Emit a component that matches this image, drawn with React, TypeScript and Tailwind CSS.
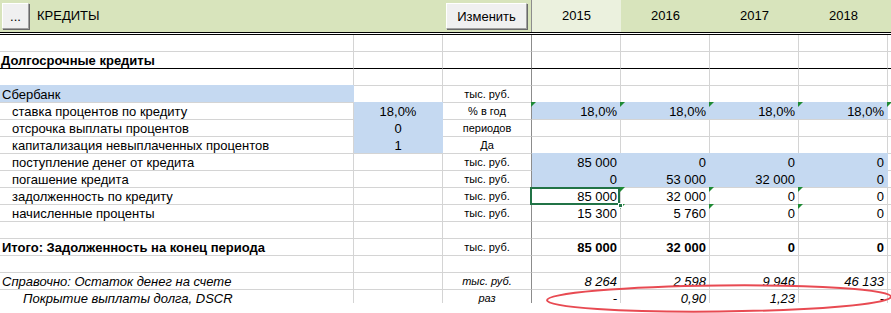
// Excel-like credit sheet: frozen header band, label/value/unit columns and four year columns.

type Row = {
  label?: string;
  pad?: string;
  style?: "bold" | "italic";
  aFill?: boolean;
  b?: string;
  bFill?: boolean;
  unit?: string;
  unitItalic?: boolean;
  years?: string[];
  yFill?: boolean;
  yBold?: boolean;
  yItalic?: boolean;
  tri?: boolean[];
  selected?: boolean;
  noTop?: boolean;
  topBlack?: boolean;
  short?: boolean;
};

const rows: Row[] = [
  { noTop: true },
  { label: "Долгосрочные кредиты", style: "bold", pad: "pl-[1px]" },
  { topBlack: true },
  { label: "Сбербанк", pad: "pl-[2px]", aFill: true, unit: "тыс. руб." },
  {
    label: "ставка процентов по кредиту",
    b: "18,0%",
    bFill: true,
    unit: "% в год",
    years: ["18,0%", "18,0%", "18,0%", "18,0%"],
    yFill: true,
    tri: [true, true, true, true, true],
  },
  { label: "отсрочка выплаты процентов", b: "0", bFill: true, unit: "периодов" },
  { label: "капитализация невыплаченных процентов", b: "1", bFill: true, unit: "Да" },
  {
    label: "поступление денег от кредита",
    unit: "тыс. руб.",
    years: ["85 000", "0", "0", "0"],
    yFill: true,
  },
  {
    label: "погашение кредита",
    unit: "тыс. руб.",
    years: ["0", "53 000", "32 000", "0"],
    yFill: true,
  },
  {
    label: "задолженность по кредиту",
    unit: "тыс. руб.",
    years: ["85 000", "32 000", "0", "0"],
    tri: [false, true, true, true, false],
    selected: true,
  },
  {
    label: "начисленные проценты",
    unit: "тыс. руб.",
    years: ["15 300", "5 760", "0", "0"],
    tri: [false, true, true, true, false],
  },
  {},
  {
    label: "Итого: Задолженность на конец периода",
    style: "bold",
    pad: "pl-[2px]",
    unit: "тыс. руб.",
    years: ["85 000", "32 000", "0", "0"],
    yBold: true,
  },
  {},
  {
    label: "Справочно: Остаток денег на счете",
    style: "italic",
    pad: "pl-[2px]",
    unit: "тыс. руб.",
    unitItalic: true,
    years: ["8 264", "2 598", "9 946", "46 133"],
    yItalic: true,
  },
  {
    label: "Покрытие выплаты долга, DSCR",
    style: "italic",
    pad: "pl-[23px]",
    unit: "раз",
    unitItalic: true,
    years: ["-", "0,90", "1,23", "-"],
    yItalic: true,
    short: true,
  },
];

function Triangle() {
  return (
    <svg
      width="5"
      height="5"
      viewBox="0 0 5 5"
      className="absolute left-[-1px] top-[-1px] z-10"
    >
      <polygon points="0,0 5,0 0,5" fill="#1e8a34" />
    </svg>
  );
}

function Cell({
  row,
  fill,
  w,
  dark,
  className,
  children,
}: {
  row: Row;
  fill?: boolean;
  w: string;
  dark?: boolean;
  className?: string;
  children?: React.ReactNode;
}) {
  const top = row.noTop
    ? ""
    : row.topBlack
      ? "border-t border-t-black"
      : fill
        ? "border-t border-t-[#c5d9f1]"
        : "border-t border-t-[#d4d4d4]";
  const right = dark
    ? "border-r border-r-[#8c8c8c]"
    : fill
      ? "border-r border-r-[#c5d9f1]"
      : "border-r border-r-[#d4d4d4]";
  return (
    <div
      className={`relative shrink-0 h-full ${w} ${top} ${right} ${fill ? "bg-[#c5d9f1]" : ""} ${className ?? ""}`}
    >
      {children}
    </div>
  );
}

function SheetRow({ row }: { row: Row }) {
  const h = row.noTop ? "h-[16px]" : row.short ? "h-[14px]" : "h-[17px]";
  const labelStyle =
    row.style === "bold" ? "font-bold" : row.style === "italic" ? "italic" : "";
  const yearStyle = row.yBold ? "font-bold" : row.yItalic ? "italic" : "";
  return (
    <div className={`flex ${h} leading-[17px] whitespace-nowrap`}>
      <Cell row={row} w="w-[354px]" fill={row.aFill}>
        <span className={`block ${row.pad ?? "pl-[12px]"} ${labelStyle}`}>{row.label}</span>
      </Cell>
      <Cell row={row} w="w-[89px]" fill={row.bFill} className="text-center">
        {row.b}
      </Cell>
      <Cell row={row} w="w-[89px]" dark className={`text-center text-[11px] ${row.unitItalic ? "italic" : ""}`}>
        {row.unit}
      </Cell>
      {[0, 1, 2, 3].map((i) => (
        <Cell
          key={i}
          row={row}
          w="w-[89px]"
          fill={row.yFill}
          className={`text-right pr-[3px] ${yearStyle}`}
        >
          {row.tri?.[i] && <Triangle />}
          {row.years?.[i]}
          {row.selected && i === 0 && (
            <>
              <div className="absolute top-[-1px] left-[-2px] right-0 bottom-[-1px] z-20 border-2 border-[#217346]" />
              <div className="absolute left-[86px] top-[15px] z-30 w-[5px] h-[5px] bg-[#217346] border border-white" />
            </>
          )}
        </Cell>
      ))}
      <Cell row={row} w="flex-1" className="border-r-0">
        {row.tri?.[4] && <Triangle />}
      </Cell>
    </div>
  );
}

function SheetButton({ label, w }: { label: string; w: string }) {
  return (
    <button
      className={`${w} h-[26px] shrink-0 bg-[#f0f0f0] border border-t-white border-l-white border-r-[#a0a0a0] border-b-[#a0a0a0] shadow-[1px_1px_0_#696969] text-[13px] leading-none text-black`}
    >
      {label}
    </button>
  );
}

export default function App() {
  return (
    <div className="relative w-[891px] h-[313px] overflow-hidden bg-white text-[13px] text-black font-['Liberation_Sans',Arial,sans-serif]">
      <header className="flex h-[35px] border-b-[3px] border-double border-black">
        <div className="flex items-center w-[532px] shrink-0 bg-[#d8e4bc] border-r border-r-[#8c8c8c] pl-[2px] pr-[4px]">
          <SheetButton label="..." w="w-[27px]" />
          <span className="ml-[8px]">КРЕДИТЫ</span>
          <div className="flex-1" />
          <SheetButton label="Изменить" w="w-[81px]" />
        </div>
        <div className="w-[89px] shrink-0 bg-[#ebf1de] flex items-center justify-center">2015</div>
        <div className="w-[89px] shrink-0 bg-[#d8e4bc] flex items-center justify-center">2016</div>
        <div className="w-[89px] shrink-0 bg-[#d8e4bc] flex items-center justify-center">2017</div>
        <div className="w-[89px] shrink-0 bg-[#d8e4bc] flex items-center justify-center">2018</div>
        <div className="flex-1 bg-[#d8e4bc]" />
      </header>

      <div className="flex flex-col">
        {rows.map((r, i) => (
          <SheetRow key={i} row={r} />
        ))}
      </div>

      {/* red hand-drawn ring around the DSCR row */}
      <svg
        className="absolute inset-0 pointer-events-none"
        width="891"
        height="313"
        viewBox="0 0 891 313"
      >
        <ellipse
          cx="719"
          cy="298.5"
          rx="172"
          ry="13"
          fill="none"
          stroke="#e84a52"
          strokeWidth="2"
          transform="rotate(-0.6 719 298.5)"
        />
      </svg>
    </div>
  );
}
